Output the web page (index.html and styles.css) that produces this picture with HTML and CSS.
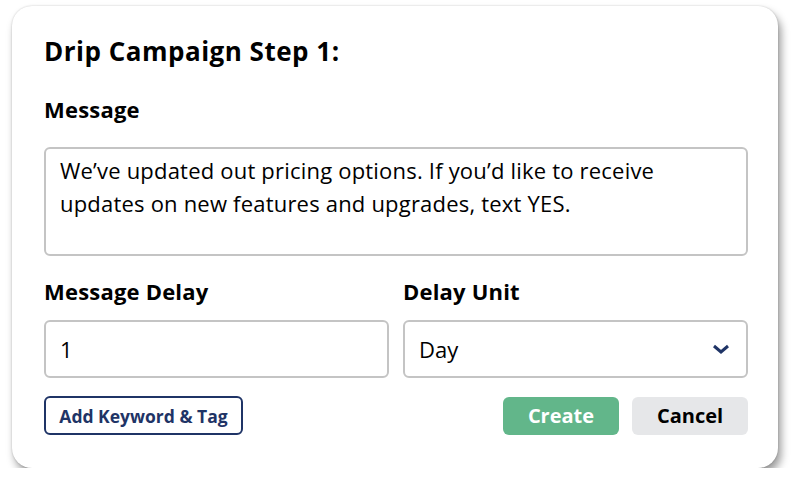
FILE: index.html
```html
<!DOCTYPE html>
<html lang="en">
<head>
  <meta charset="UTF-8">
  <title>Drip Campaign Step</title>
  <link rel="stylesheet" href="styles.css">
</head>
<body>
  <div class="card">
    <h2 class="title">Drip Campaign Step 1:</h2>

    <label class="label label-message">Message</label>
    <div class="textarea">We’ve updated out pricing options. If you’d like to receive updates on new features and upgrades, text YES.</div>

    <div class="row">
      <div class="col">
        <label class="label">Message Delay</label>
        <div class="field">1</div>
      </div>
      <div class="col">
        <label class="label">Delay Unit</label>
        <div class="field select">
          <span>Day</span>
          <svg class="chevron" width="18" height="10" viewBox="0 0 18 10">
            <path d="M2 2 L9 8 L16 2" fill="none" stroke="#1f3466" stroke-width="3"/>
          </svg>
        </div>
      </div>
    </div>

    <div class="actions">
      <button class="btn btn-outline">Add Keyword &amp; Tag</button>
      <div class="spacer"></div>
      <button class="btn btn-create">Create</button>
      <button class="btn btn-cancel">Cancel</button>
    </div>
  </div>
</body>
</html>
```

FILE: styles.css
```css
body { margin: 0; background: #fff; font-family: "Open Sans", "Noto Sans", sans-serif; color: #000; }
.card {
  box-sizing: border-box;
  width: 766px; height: 462px;
  margin: 6px 0 0 12px;
  padding: 28px 30px 0 32px;
  background: #fff;
  border-radius: 20px;
  box-shadow: 0 0 2px rgba(0,0,0,0.2), 3px 6px 9px rgba(0,0,0,0.4);
}
.title { font-size: 26px; font-weight: 700; margin: 0 0 26px; line-height: 34px; letter-spacing: 0.5px; }
.label { display: block; font-size: 22px; font-weight: 700; line-height: 30px; margin-bottom: 14px; letter-spacing: 0.2px; }
.label-message { margin-bottom: 23px; }
.textarea {
  box-sizing: border-box;
  height: 109px;
  border: 2px solid #c4c4c4;
  border-radius: 6px;
  padding: 5px 14px;
  font-size: 22px; line-height: 33px;
  letter-spacing: 0.2px;
}
.row { display: flex; gap: 14px; margin-top: 20px; }
.col { flex: 1; }
.field {
  box-sizing: border-box;
  height: 58px;
  border: 2px solid #c4c4c4;
  border-radius: 6px;
  padding: 0 14px;
  font-size: 22px;
  display: flex; align-items: center;
}
.select { justify-content: space-between; padding-right: 16px; }
.actions { display: flex; align-items: center; gap: 13px; margin-top: 18px; }
.spacer { flex: 1; }
.btn { font-family: inherit; font-weight: 700; border-radius: 6px; cursor: pointer; padding: 0; }
.btn-outline {
  width: 199px; height: 39px;
  background: #fff; border: 2px solid #1f3466; color: #1f3466;
  font-size: 17.5px;
}
.btn-create, .btn-cancel { width: 116px; height: 38px; border: none; font-size: 20px; }
.btn-create { background: #62b68a; color: #fff; }
.btn-cancel { background: #e6e7e9; color: #000; }
```
